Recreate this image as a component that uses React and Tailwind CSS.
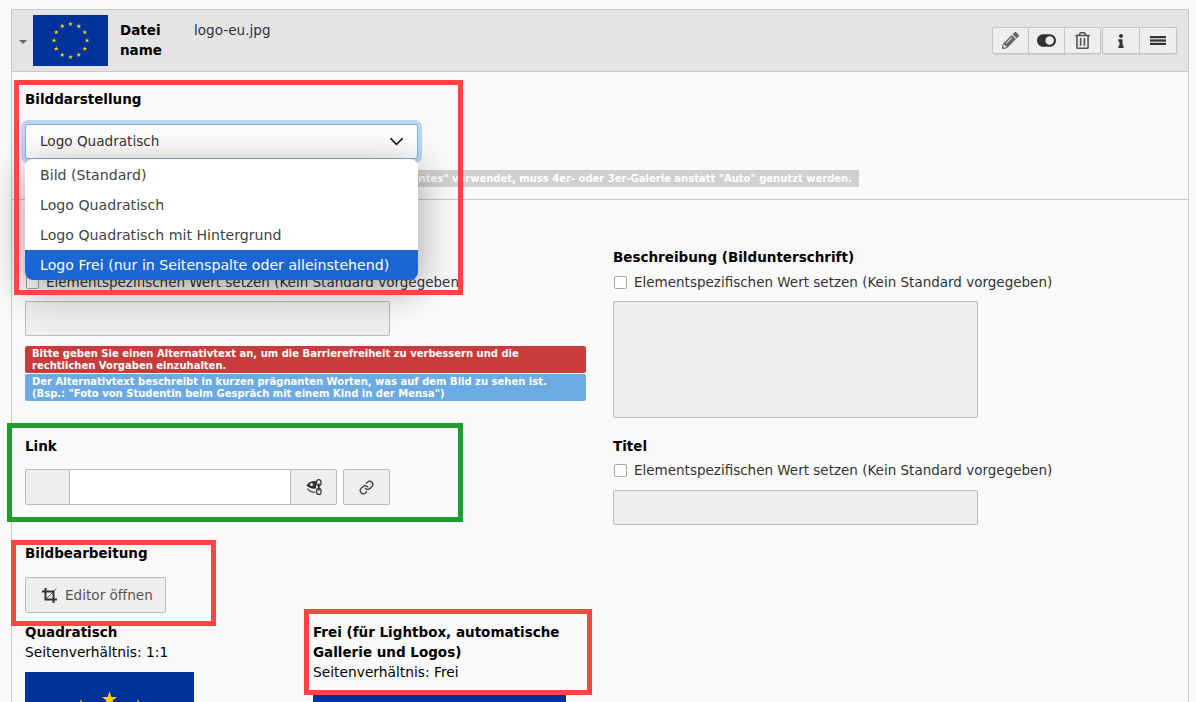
import { FaPencilAlt, FaToggleOn, FaRegTrashAlt, FaInfo } from 'react-icons/fa';
import { ChevronDown, Link as LinkIcon } from 'lucide-react';

const STARS = Array.from({ length: 12 }, (_, i) => (i * Math.PI) / 6);

function starPoints(cx, cy, r) {
  const pts = [];
  for (let i = 0; i < 10; i++) {
    const a = (i * Math.PI) / 5 - Math.PI / 2;
    const rad = i % 2 === 0 ? r : r * 0.4;
    pts.push(`${cx + rad * Math.cos(a)},${cy + rad * Math.sin(a)}`);
  }
  return pts.join(' ');
}

// EU flag, circle radius and star size given in svg units
function EuFlag({ w, h, radius, star, className }) {
  return (
    <svg width={w} height={h} viewBox={`0 0 ${w} ${h}`} className={className}>
      <rect width={w} height={h} fill="#003399" />
      {STARS.map((a, i) => (
        <polygon
          key={i}
          points={starPoints(w / 2 + radius * Math.sin(a), h / 2 - radius * Math.cos(a), star)}
          fill="#ffcc00"
        />
      ))}
    </svg>
  );
}

function ToolButton({ children, className = '' }) {
  return (
    <button className={`flex h-[27px] w-[37px] items-center justify-center border border-[#c4c4c4] bg-[#eeeeee] text-[#333] shadow-[0_1px_1px_rgba(0,0,0,0.08)] ${className}`}>
      {children}
    </button>
  );
}

function Label({ children, className = '' }) {
  return <div className={`text-[13.5px] font-bold leading-[20px] text-black ${className}`}>{children}</div>;
}

function OverrideCheck({ className = '' }) {
  return (
    <label className={`flex h-[20px] items-center whitespace-nowrap text-[13.5px] leading-[20px] text-[#333] ${className}`}>
      <span className="mr-[7px] ml-[1px] h-[13px] w-[13px] shrink-0 rounded-[2px] border border-[#a8a8a8] bg-white" />
      Elementspezifischen Wert setzen (Kein Standard vorgegeben)
    </label>
  );
}

function Box({ className = '' }) {
  return <div className={`rounded-[2px] border border-[#bbbbbb] bg-[#eeeeee] ${className}`} />;
}

export default function App() {
  return (
    <div className="relative h-[702px] w-[1196px] overflow-hidden bg-[#fafafa] pt-[9px] pr-[7px] pl-[11px] font-['DejaVu_Sans','Liberation_Sans',sans-serif]">
      <div className="h-[800px] border-x border-t border-[#c8c8c8]">
        {/* file header */}
        <div className="flex h-[62px] items-center border-b border-[#c8c8c8] bg-[#e4e4e4] pr-[11px]">
          <svg width="8" height="4" viewBox="0 0 8 4" className="ml-[7px] mt-[2px]">
            <polygon points="0,0 8,0 4,4" fill="#666" />
          </svg>
          <EuFlag w={75} h={51} radius={16.5} star={2.6} className="ml-[6px]" />
          <div className="ml-[12px] w-[74px] self-start pt-[10px] text-[13.5px] font-bold leading-[20px] text-black">
            Datei name
          </div>
          <div className="self-start pt-[10px] text-[13.6px] leading-[20px] text-[#333]">logo-eu.jpg</div>
          <div className="ml-auto flex gap-[1px]">
            <div className="flex">
              <ToolButton className="rounded-l-[2px]"><FaPencilAlt size={17} className="text-[#666]" /></ToolButton>
              <ToolButton className="-ml-px"><FaToggleOn size={19} /></ToolButton>
              <ToolButton className="-ml-px rounded-r-[2px]"><FaRegTrashAlt size={17} className="text-[#555]" /></ToolButton>
            </div>
            <div className="flex">
              <ToolButton className="w-[38px] rounded-l-[2px]"><FaInfo size={14} /></ToolButton>
              <ToolButton className="-ml-px w-[38px] rounded-r-[2px]">
                <svg width="16" height="9" viewBox="0 0 16 9" fill="#333">
                  <rect width="16" height="2.2" />
                  <rect y="3.4" width="16" height="2.2" />
                  <rect y="6.8" width="16" height="2.2" />
                </svg>
              </ToolButton>
            </div>
          </div>
        </div>

        {/* Bilddarstellung */}
        <div className="border-b border-[#c8c8c8] pt-[17px] pb-[12px] pl-[13px]">
          <Label>Bilddarstellung</Label>
          <div className="mt-[15px] flex h-[35px] w-[393px] items-center justify-between rounded-[3px] border border-[#7fb0e6] bg-white pr-[9px] pl-[14px] text-[13.6px] text-[#333] shadow-[0_0_0_4px_#b9d7f5]">
            Logo Quadratisch
            <ChevronDown size={23} strokeWidth={1.7} className="text-[#222]" />
          </div>
          <div className="mt-[11px] flex h-[17px] w-[834px] items-center justify-end overflow-hidden whitespace-nowrap bg-[#d0d0d0] pr-[7px] text-[10px] font-bold text-white">
            Wenn das Bild innerhalb eines "Mehrspaltigen Inhaltselementes" verwendet, muss 4er- oder 3er-Galerie anstatt "Auto" genutzt werden.
          </div>
        </div>

        {/* two columns */}
        <div className="flex gap-[27px] pl-[13px]">
          <div className="w-[561px] pt-[47px]">
            <Label>Alternativtext</Label>
            <OverrideCheck className="mt-[5px]" />
            <Box className="mt-[9px] h-[35px] w-[365px]" />
            <div className="mt-[10px] h-[27px] rounded-[2px] bg-[#c83c3c] px-[7px] py-[2px] text-[10px] leading-[11.5px] font-bold text-white">
              Bitte geben Sie einen Alternativtext an, um die Barrierefreiheit zu verbessern und die rechtlichen Vorgaben einzuhalten.
            </div>
            <div className="mt-[1px] h-[27px] rounded-[2px] bg-[#6caae4] px-[7px] py-[2px] text-[10px] leading-[11.5px] font-bold text-white">
              Der Alternativtext beschreibt in kurzen prägnanten Worten, was auf dem Bild zu sehen ist. (Bsp.: "Foto von Studentin beim Gespräch mit einem Kind in der Mensa")
            </div>

            <Label className="mt-[35px]">Link</Label>
            <div className="mt-[13px] flex h-[36px]">
              <div className="w-[45px] rounded-l-[2px] border border-[#bbbbbb] bg-[#eeeeee]" />
              <div className="w-[220px] border-y border-[#bbbbbb] bg-white" />
              <button className="flex w-[47px] items-center justify-center rounded-r-[2px] border border-[#bbbbbb] bg-[#eeeeee]">
                <svg width="16" height="16" viewBox="0 0 16 16" fill="none" stroke="#333" strokeWidth="1.2">
                  <path d="M0.5 6.5 C2 3.5 6 1.5 10 2 L10 9.5 C6 10 2.5 9 0.5 6.5 Z" fill="#333" stroke="none" />
                  <circle cx="5.5" cy="5.5" r="1.5" fill="#eee" stroke="none" />
                  <path d="M1.5 9.5 C3.5 12.5 6.5 13.5 9.5 13" />
                  <rect x="10.6" y="0.6" width="4.4" height="6" rx="2.2" fill="#eee" />
                  <rect x="10.6" y="9.4" width="4.4" height="6" rx="2.2" fill="#eee" />
                  <path d="M12.8 4.5 V11.5" strokeWidth="1.8" />
                </svg>
              </button>
              <button className="ml-[6px] flex w-[47px] items-center justify-center rounded-[2px] border border-[#bbbbbb] bg-[#eeeeee] text-[#333]">
                <LinkIcon size={15} strokeWidth={2} />
              </button>
            </div>

            <Label className="mt-[38px]">Bildbearbeitung</Label>
            <button className="mt-[14px] flex h-[36px] w-[141px] items-center rounded-[2px] border border-[#bbbbbb] bg-[#eeeeee] pl-[16px] text-[13.6px] text-[#555]">
              <svg width="15" height="15" viewBox="0 0 15 15" fill="none" stroke="#333" strokeWidth="2" className="mr-[8px]">
                <path d="M0 3.5 H11.5 V15" />
                <path d="M3.5 0 V11.5 H15" />
                <path d="M3.5 11.5 L14.5 0.5" strokeWidth="0.8" />
              </svg>
              Editor öffnen
            </button>

            <div className="mt-[9px] flex">
              <div className="w-[288px]">
                <Label>Quadratisch</Label>
                <div className="text-[13.8px] leading-[20px] text-black">Seitenverhältnis: 1:1</div>
                <EuFlag w={169} h={169} radius={57} star={8} className="mt-[10px]" />
              </div>
              <div className="w-[262px]">
                <Label>Frei (für Lightbox, automatische Gallerie und Logos)</Label>
                <div className="text-[13.8px] leading-[21px] text-black">Seitenverhältnis: Frei</div>
                <EuFlag w={253} h={172} radius={58} star={8} className="mt-[11px]" />
              </div>
            </div>
          </div>

          <div className="w-[365px] pt-[47px]">
            <Label className="whitespace-nowrap">Beschreibung (Bildunterschrift)</Label>
            <OverrideCheck className="mt-[5px]" />
            <Box className="mt-[9px] h-[117px] w-[365px]" />
            <Label className="mt-[18px]">Titel</Label>
            <OverrideCheck className="mt-[4px]" />
            <Box className="mt-[10px] h-[35px] w-[365px]" />
          </div>
        </div>
      </div>

      {/* open select list */}
      <div className="absolute top-[159px] left-[25px] w-[393px] overflow-hidden rounded-[8px] bg-white pt-px text-[14.15px] text-[#444] shadow-[0_8px_40px_rgba(0,0,0,0.38)]">
        <div className="flex h-[30px] items-center pt-[2px] pl-[15px]">Bild (Standard)</div>
        <div className="flex h-[30px] items-center pt-[2px] pl-[15px]">Logo Quadratisch</div>
        <div className="flex h-[30px] items-center pt-[2px] pl-[15px]">Logo Quadratisch mit Hintergrund</div>
        <div className="flex h-[30px] items-center bg-[#1a66d4] pt-[2px] pl-[15px] text-white">Logo Frei (nur in Seitenspalte oder alleinstehend)</div>
      </div>

      {/* annotation frames */}
      <div className="pointer-events-none absolute top-[80px] left-[14px] h-[215px] w-[449px] border-[5px] border-[#ff4444]" />
      <div className="pointer-events-none absolute top-[423px] left-[7px] h-[99px] w-[456px] border-[5px] border-[#1f9e30]" />
      <div className="pointer-events-none absolute top-[540px] left-[11px] h-[86px] w-[205px] border-[5px] border-[#ff4444]" />
      <div className="pointer-events-none absolute top-[609px] left-[304px] h-[86px] w-[288px] border-[5px] border-[#ff4444]" />
    </div>
  );
}
